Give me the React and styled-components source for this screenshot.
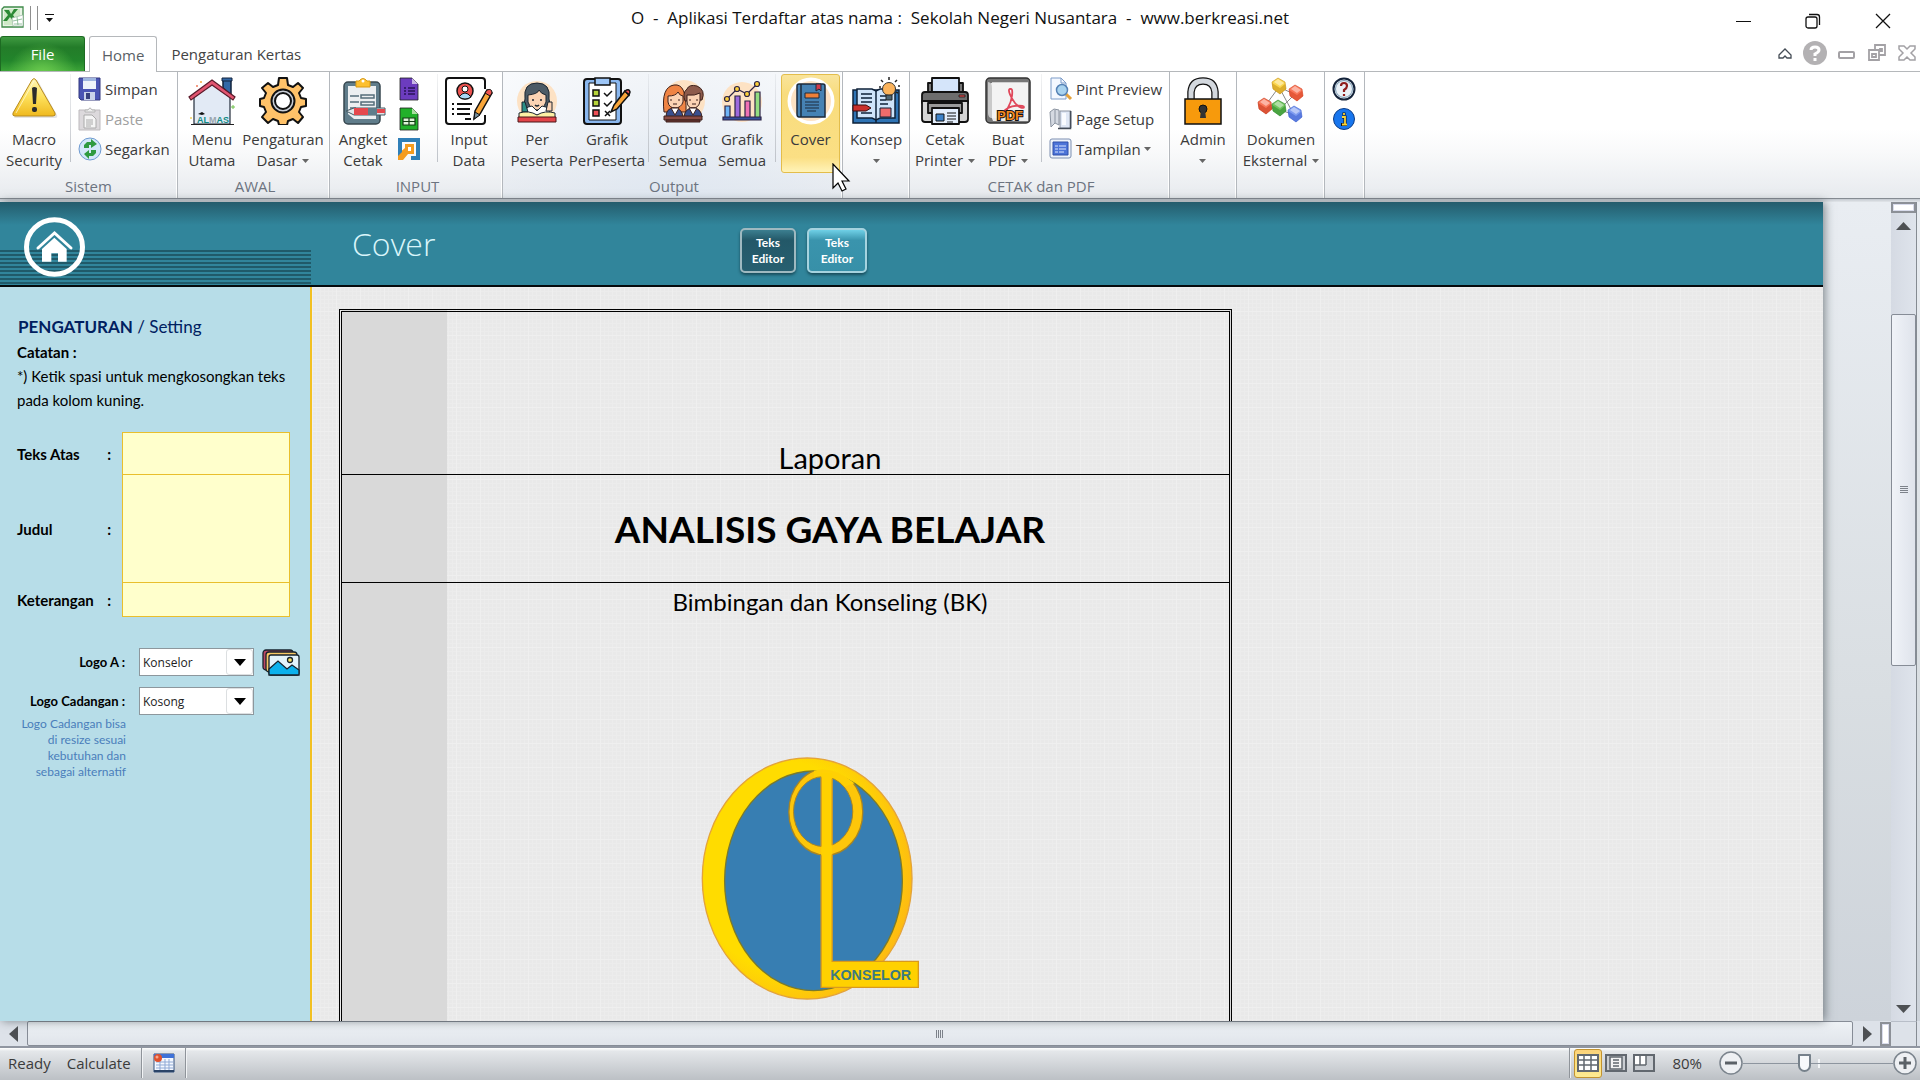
import React from 'react'
import styled, { createGlobalStyle, css } from 'styled-components'

const GlobalStyle = createGlobalStyle`
  * {
    box-sizing: border-box;
  }

  body {
    margin: 0;
    background: #fff;
    color: #3b3b3b;
    font-family: 'Open Sans', 'Noto Sans', sans-serif;
    font-size: 15px;
  }

  button, input, select, textarea {
    font: inherit;
    color: inherit;
  }

  svg {
    display: block;
    flex: none;
  }
`

const Window = styled.div`
  display: flex;
  flex-direction: column;
  height: 100vh;
  overflow: hidden;
`

const PlainButton = styled.button`
  display: flex;
  align-items: center;
  justify-content: center;
  padding: 0;
  border: 0;
  background: none;
`

/* ---------- title bar ---------- */

const TitleBar = styled.header`
  display: grid;
  grid-template-columns: 1fr auto 1fr;
  align-items: center;
  height: 36px;
`

const QuickAccess = styled.div`
  display: flex;
  align-items: center;
  gap: 6px;
  height: 30px;
`

const QuickLine = styled.span`
  width: 1px;
  height: 24px;
  background: #8f8f8f;
`

const Title = styled.h1`
  margin: 0;
  color: #111;
  font-size: 17px;
  font-weight: 400;
  line-height: 36px;
  white-space: pre;
`

const WindowButtons = styled.div`
  display: flex;
  justify-content: flex-end;
  gap: 24px;
  padding: 6px 14px 0 0;
`

const WindowButton = styled(PlainButton)`
  width: 46px;
  height: 30px;
`

/* ---------- tabs ---------- */

const TabBar = styled.nav`
  display: flex;
  align-items: flex-end;
  height: 36px;
  border-bottom: 1px solid #b5b8bb;
`

const FileTab = styled(PlainButton)`
  width: 85px;
  height: 35px;
  border: 1px solid #1d6b22;
  border-bottom: 0;
  border-radius: 3px 3px 0 0;
  background: radial-gradient(ellipse at 50% 115%, #6fce50 0%, rgba(80, 180, 60, 0) 60%),
    linear-gradient(#3f9a41 0%, #237c29 30%, #22852b 70%, #3ba337 100%);
  color: #fff;
`

const Tab = styled(PlainButton)`
  height: ${({ $active }) => ($active ? 36 : 35)}px;
  padding: 0 ${({ $active }) => ($active ? 12 : 14)}px;
  color: #444;
  ${({ $active }) => $active && css`
    margin: 0 0 -1px 4px;
    border: 1px solid #b5b8bb;
    border-bottom: 0;
    border-radius: 3px 3px 0 0;
    background: #fff;
    color: #5a5f66;
  `}
`

const TabTools = styled.div`
  display: flex;
  align-items: center;
  gap: 11px;
  margin-left: auto;
  padding: 0 4px 6px 0;
`

/* ---------- ribbon ---------- */

const Ribbon = styled.div`
  display: flex;
  height: 127px;
  border-bottom: 1px solid #858b92;
  background: linear-gradient(#fff 45%, #f8f9fa 65%, #e7eaee 100%);
`

const RibbonShade = styled.div`
  height: 3px;
  background: linear-gradient(#c3c8cf, #e2e6ea);
`

const Group = styled.section`
  display: flex;
  flex: none;
  flex-direction: column;
  width: ${({ $width }) => $width}px;
  padding: 2px 0 0 ${({ $flush }) => ($flush ? 0 : 3)}px;
  border-right: 1px solid #b4b8bd;
  box-shadow: inset -1px 0 #fff;
  ${({ $hot }) => $hot && css`
    background: radial-gradient(ellipse at 50% 120%, #dfe7f1 0%, rgba(224, 231, 240, 0.5) 60%, rgba(235, 240, 246, 0.3) 100%);
  `}
`

const GroupBody = styled.div`
  display: flex;
  height: 99px;
`

const GroupLabel = styled.h2`
  margin: 3px 0 0;
  color: #6c7480;
  font-size: 15px;
  font-weight: 400;
  line-height: 20px;
  text-align: center;
`

const BigButton = styled.button`
  position: relative;
  display: flex;
  flex: none;
  flex-direction: column;
  align-items: center;
  width: ${({ $width }) => $width}px;
  padding: 3px 0 0;
  border: 0;
  background: none;
  line-height: 21px;
  white-space: nowrap;

  ${({ $hot }) => $hot && css`
    padding-top: 2px;
    border: 1px solid #e3bd4b;
    border-radius: 3px;
    background: linear-gradient(#f9e49b, #f8dc7d 20%, #fbdf84 85%, #fff3b8 100%);
  `}
`

const BigLabel = styled.span`
  display: flex;
  flex-direction: column;
  align-items: center;
  margin-top: 4px;
`

const LabelLine = styled.span`
  display: flex;
  align-items: center;
  justify-content: center;
  gap: 5px;
  height: 21px;
`

const Divider = styled.span`
  flex: none;
  width: 1px;
  height: 88px;
  margin: ${({ $wide }) => ($wide ? '0 5px' : '0 3px 0 2px')};
  background: linear-gradient(rgba(190, 194, 200, 0.2), #bfc3c9);
`

const SmallColumn = styled.div`
  display: flex;
  flex: none;
  flex-direction: column;
  width: ${({ $width }) => $width || 'auto'};
  padding-left: 4px;
`

const SmallButton = styled(PlainButton)`
  justify-content: flex-start;
  gap: 3px;
  height: 30px;
  white-space: nowrap;
  color: ${({ disabled }) => (disabled ? '#a0a0a0' : 'inherit')};
`

const Pointer = styled.svg`
  position: absolute;
  z-index: 2;
  top: 88px;
  left: 50px;
`

/* ---------- sheet ---------- */

const Workspace = styled.div`
  display: flex;
  flex: 1;
  min-height: 0;
  background: linear-gradient(#e9edf2, #d9dee2 60%, #cdd3da);
`

const Sheet = styled.main`
  display: flex;
  flex: 1;
  flex-direction: column;
  min-width: 0;
  box-shadow: 2px 0 9px rgba(60, 70, 75, 0.6);
  z-index: 1;
`

const Banner = styled.div`
  display: flex;
  flex: none;
  height: 85px;
  border-bottom: 2px solid #050a0c;
  background: linear-gradient(#245c6c, #31859b 23px);
`

const HomeArea = styled.div`
  width: 311px;
  padding: 15px 0 0 24px;
  background: repeating-linear-gradient(#205a69 0 2px, #31859b 2px 4px) 0 48px no-repeat;
`

const BannerTitle = styled.h2`
  width: 388px;
  margin: 0;
  padding-left: 41px;
  color: #d9f5fa;
  font-size: 32px;
  font-weight: 300;
  line-height: 84px;
`

const BannerButtons = styled.div`
  display: flex;
  align-items: flex-start;
  gap: 11px;
  padding: 26px 0 0 41px;
`

const EditorButton = styled.button`
  width: ${({ $dark }) => ($dark ? 56 : 60)}px;
  height: 45px;
  padding: 0;
  border: 2px solid ${({ $dark }) => ($dark ? '#9fb9c0' : '#a5d3df')};
  border-radius: 5px;
  background: ${({ $dark }) => ($dark
    ? 'linear-gradient(#3c7f90, #235868 25%, #275f70)'
    : 'linear-gradient(#6fd0e6, #3a94ad 25%, #3790a8)')};
  box-shadow: 0 2px 3px rgba(10, 40, 50, 0.6);
  color: #fff;
  font-family: Lato, sans-serif;
  font-size: 12px;
  font-weight: 700;
  line-height: 16px;
`

const SheetBody = styled.div`
  display: flex;
  flex: 1;
  min-height: 0;
  background-color: #e9e9e9;
  background-image: repeating-linear-gradient(90deg, #efefef 0 1px, transparent 1px 24px),
    repeating-linear-gradient(#efefef 0 1px, transparent 1px 24px),
    repeating-linear-gradient(90deg, #ececec 0 1px, transparent 1px 4px),
    repeating-linear-gradient(#ececec 0 1px, transparent 1px 4px);
  color: #000;
  font-family: Lato, sans-serif;
`

const Sidebar = styled.aside`
  flex: none;
  width: 312px;
  padding-top: 28px;
  border-right: 2px solid #f2c021;
  background: #b7dde8;
  font-size: 15px;
`

const SideTitle = styled.h3`
  margin: 0 0 1px;
  padding-left: 18px;
  color: #002060;
  font-size: 17px;
  font-weight: 400;
  line-height: 24px;
`

const Notes = styled.p`
  margin: 0 0 20px;
  padding-left: 17px;
  line-height: 24px;
  white-space: nowrap;
`

const Field = styled.div`
  display: flex;
  gap: 11px;
  height: ${({ $height }) => $height}px;
  margin-bottom: -1px;
`

const FieldLabel = styled.label`
  display: flex;
  align-items: center;
  justify-content: space-between;
  width: 111px;
  padding-left: 17px;
  font-weight: 700;
`

const YellowBox = styled.textarea`
  width: 168px;
  padding: 4px;
  border: 1px solid #e9bf2c;
  background: #ffffcc;
  resize: none;
`

const LogoRows = styled.div`
  display: flex;
  flex-direction: column;
  gap: 11px;
  margin-top: 32px;
`

const LogoRow = styled.div`
  display: flex;
  align-items: center;
  height: 28px;
`

const LogoLabel = styled.label`
  width: 125px;
  margin-right: 14px;
  font-size: 13px;
  font-weight: 700;
  text-align: right;
`

const SelectBox = styled.div`
  display: grid;
  grid-template-columns: 1fr 27px;
  width: 115px;
  height: 28px;
  margin-right: 8px;
  border: 1px solid #8d979d;
  background: #fff;
`

const Select = styled.select`
  grid-area: 1 / 1 / 2 / 3;
  padding: 0 0 0 3px;
  border: 0;
  background: none;
  color: #222;
  font-family: 'Open Sans', sans-serif;
  font-size: 12px;
  appearance: none;
`

const SelectArrow = styled.span`
  grid-area: 1 / 2 / 2 / 3;
  display: flex;
  align-items: center;
  justify-content: center;
  border: 1px solid #dcdfe1;
  border-radius: 3px;
  pointer-events: none;
`

const Hint = styled.p`
  width: 126px;
  margin: 1px 0 0;
  padding-left: 12px;
  color: #4a7ebb;
  font-size: 12px;
  line-height: 16px;
  text-align: right;
`

const Report = styled.article`
  display: flex;
  flex-direction: column;
  width: 893px;
  margin: 22px 0 0 27px;
  border: 3px double #000;
  border-bottom: 0;
  background: linear-gradient(90deg, #d9d9d9 105px, transparent 105px);
`

const ReportRow = styled.div`
  display: flex;
  flex-direction: column;
  align-items: center;
  justify-content: ${({ $align }) => $align};
  height: ${({ $height }) => $height};
  padding: ${({ $last }) => ($last ? 5 : 0)}px 16px 0 105px;
  border-bottom: ${({ $last }) => ($last ? 0 : '1px solid #000')};
`

const ReportText = styled.p`
  margin: 0;
  font-size: ${({ $size }) => $size}px;
  font-weight: ${({ $bold }) => ($bold ? 700 : 400)};
  line-height: ${({ $size }) => $size + 4}px;
`

const LogoHolder = styled.div`
  padding: 140px 40px 0 0;
`

/* ---------- scroll bars ---------- */

const Backdrop = styled.div`
  flex: none;
  width: 68px;
`

const VScroll = styled.div`
  display: flex;
  flex: none;
  flex-direction: column;
  align-items: center;
  width: 26px;
  margin-right: 3px;
  border-right: 1px solid #858b92;
  background: linear-gradient(90deg, #d5dae3, #dfe4ec);
`

const SplitBox = styled.span`
  width: ${({ $upright }) => ($upright ? 11 : 25)}px;
  height: ${({ $upright }) => ($upright ? 24 : 11)}px;
  border: 2px solid #8c9097;
  background: #fff;
  box-shadow: inset 0 0 0 1px #d9dcec;
`

const ScrollArrow = styled(PlainButton)`
  flex: none;
  width: 27px;
  height: 25px;
`

const Gap = styled.span`
  flex: ${({ $grow }) => $grow} 0 0;
`

const Thumb = styled.div`
  display: flex;
  align-items: center;
  justify-content: center;
  flex: ${({ $grow }) => $grow} 0 0;
  align-self: stretch;
  border: 1px solid #868c96;
  border-radius: 2px;
  background: ${({ $upright }) => ($upright
    ? 'linear-gradient(90deg, #f0f3f8, #dfe3eb)'
    : 'linear-gradient(#eef2f6, #e0e4ea)')};
`

const HScroll = styled.div`
  display: flex;
  flex: none;
  align-items: center;
  height: 27px;
  padding: 0 3px 0 0;
  border-bottom: 2px solid #9096a1;
  background: #dde2e9;
`

const Corner = styled.span`
  align-self: stretch;
  width: 26px;
  border-top: 1px solid #b8bec8;
  border-right: 1px solid #858b92;
`

/* ---------- status bar ---------- */

const StatusBar = styled.footer`
  display: flex;
  flex: none;
  align-items: center;
  height: 32px;
  padding: 0 3px 2px 8px;
  background: linear-gradient(#fff, #e4e7ea 10%, #bcc0c5);
`

const StatusTexts = styled.div`
  display: flex;
  gap: 16px;
`

const StatusLine = styled.span`
  width: 2px;
  height: 30px;
  margin: 0 ${({ $gap }) => $gap}px;
  border-left: 1px solid #8f949a;
  border-right: 1px solid #f1f3f5;
`

const ViewButton = styled(PlainButton)`
  width: 28px;
  height: 29px;
  ${({ $active }) => $active && css`
    border: 1px solid #c29330;
    border-radius: 3px;
    background: linear-gradient(#fbd27a, #fde07c 50%, #fdea93);
  `}
`

const Spacer = styled.span`
  flex: 1;
`

const ZoomLabel = styled.label`
  padding: 0 17px 0 14px;
`

const ZoomRange = styled.input`
  width: 150px;
  height: 24px;
  margin: 0;
  appearance: none;
  background: linear-gradient(#8d959f, #8d959f) 0 12px / 100% 1px no-repeat,
    linear-gradient(#f4f6f8, #f4f6f8) 75px 8px / 2px 9px no-repeat;

  &::-webkit-slider-thumb {
    appearance: none;
    width: 13px;
    height: 18px;
    border: 2px solid #76818b;
    border-radius: 1px 1px 7px 7px;
    background: #f7f9fb;
  }
`

/* ---------- icons ---------- */

const Icon = ({ size = 48, box = 48, children }) => (
  <svg width={size} height={size} viewBox={`0 0 ${box} ${box}`} fill="none" aria-hidden="true">
    {children}
  </svg>
)

const Caret = () => (
  <svg width="7" height="4" viewBox="0 0 7 4" aria-hidden="true">
    <path d="M0 0h7L3.500 4z" fill="#666" />
  </svg>
)

const ExcelIcon = () => (
  <Icon size={24} box={24}>
    <path d="M4 1h19v20H2V3z" fill="#e9f4e6" stroke="#3f8a4a" strokeWidth="1.300" />
    <path d="M4 3h16v16H4z" fill="#cfe9c8" />
    <path d="M4 4h5l2 4 3-5h4l-5 6 4 6h-4l-3-4-3 4H3l5-6z" fill="#2c8a35" />
    <path d="M12 12l11-3v11l-10 0z" fill="#fff" stroke="#9bb8a4" strokeWidth=".7" />
    <path d="M13 15l9-2M14 18h8M17 11l1 8" stroke="#6aa878" strokeWidth=".7" />
  </Icon>
)

const WarningIcon = () => (
  <Icon>
    <defs>
      <linearGradient id="warn" x1="0" y1="0" x2="0" y2="1">
        <stop offset="0" stopColor="#fff6b8" />
        <stop offset=".5" stopColor="#fde05a" />
        <stop offset="1" stopColor="#efb91f" />
      </linearGradient>
    </defs>
    <path d="M24 4q2-3 4 0l19 34q1 3-2 3H6q-3 0-2-3z" fill="#c9c9c9" opacity=".5" />
    <path d="M22 3q2-3 4 0l19 33q1 3-2 3H5q-3 0-2-3z" fill="url(#warn)" stroke="#b98b1e" />
    <path d="M24 4L6 36" stroke="#fffbe0" opacity=".7" />
    <path d="M22 11q2-2 5 0l-1 16h-3z" fill="#2c2c2c" />
    <rect x="22" y="30" width="5" height="5" rx="2" fill="#2c2c2c" />
  </Icon>
)

const SaveIcon = () => (
  <Icon size={24} box={24}>
    <path d="M1 1h21v22H3l-2-2z" fill="#4a55b4" stroke="#32397f" />
    <path d="M5 1h13v11H5z" fill="#eef4fb" />
    <path d="M5 1h13v3H5z" fill="#9fb6e0" />
    <path d="M6 15h11v8H6z" fill="#c9d3ea" />
    <path d="M8 16h4v6H8z" fill="#39427f" />
  </Icon>
)

const PasteIcon = () => (
  <Icon size={24} box={24}>
    <path d="M1 3h21v20H1z" fill="#dcd9dc" stroke="#bdbabd" />
    <path d="M7 5V3h3q2-4 4 0h3v2z" fill="#efefef" stroke="#b5b5b5" />
    <path d="M6 8h8l4 4v9H6z" fill="#f5f5f5" stroke="#aaa" />
    <path d="M8 13h7M8 15h7M8 17h7M8 19h5" stroke="#aaa" />
  </Icon>
)

const RefreshIcon = () => (
  <Icon size={24} box={24}>
    <circle cx="12" cy="12" r="11" fill="#d4e7fb" stroke="#6f9bd1" />
    <path d="M6 12V8l3-3h4V2l6 5-6 4V8h-2v4z" fill="#2f9a41" />
    <path d="M18 12v4l-3 3h-4v3l-5-5 5-4v3h2v-4z" fill="#2f9a41" />
    <path d="M3 12h18" stroke="#d4e7fb" strokeWidth="2" />
  </Icon>
)

const HouseIcon = () => (
  <Icon>
    <path d="M35 2h8v16l-8-7z" fill="#3268a6" stroke="#12233d" strokeWidth="1.500" />
    <path d="M34 1h10v3H34z" fill="#3268a6" stroke="#12233d" />
    <path d="M6 20L24 5l18 15v27H6z" fill="#e2eaf5" stroke="#222c3a" strokeWidth="1.200" />
    <path d="M24 3l23 17-2 3L24 8 3 23l-2-3z" fill="#e25570" stroke="#5b1a2a" strokeWidth="1.200" />
    <path d="M3 47.500h43" stroke="#222" />
    <path d="M10 37l4-2 3 2-3 1z" fill="#111" />
    <text x="9" y="46" fontFamily="Liberation Sans, sans-serif" fontSize="9" fontWeight="700">
      <tspan fill="#128a84">AL</tspan>
      <tspan fill="#9aa5ad">M</tspan>
      <tspan fill="#128a84">AS</tspan>
    </text>
    <circle cx="13" cy="5" r="1" fill="#f4a93c" />
    <circle cx="9" cy="9" r="1" fill="#f07a5a" />
    <path d="M43 30h4M45 28v4" stroke="#6fc04b" />
    <circle cx="3" cy="41" r="1" fill="#f2d25c" />
  </Icon>
)

const GearIcon = () => (
  <Icon>
    <g fill="#ffc269" stroke="#111" strokeWidth="2" strokeLinejoin="round">
      <path d="M20 1h8l1 7 5 2 5-4 5 5-4 5 2 5 5 1v7l-5 1-2 5 4 5-5 6-5-4-5 2-1 4h-8l-1-4-5-2-5 4-6-6 4-5-2-5-4-1v-7l4-1 2-5-4-5 6-5 5 4 5-2z" />
      <circle cx="24" cy="24" r="11.500" fill="#c9ced6" />
      <circle cx="24" cy="24" r="8" fill="#fff" />
    </g>
  </Icon>
)

const ClipboardIcon = () => (
  <Icon>
    <rect x="5" y="5" width="36" height="42" rx="4" fill="#607d8b" stroke="#37474f" strokeWidth="1.500" />
    <path d="M9 9h28v33H15l-6-5z" fill="#eceff1" />
    <path d="M17 4h3q4-5 8 0h3v6H17z" fill="#fdc02f" stroke="#d99a14" />
    <circle cx="24" cy="4" r="1.500" fill="#fff" />
    <path d="M11 19h9M11 25h9M11 31h6M22 18h13v3H22zM22 25h13v3H22z" stroke="#546e7a" strokeWidth="1.500" />
    <path d="M7 34l8-3h31v7H15z" fill="#dfe5e8" stroke="#455a64" />
    <path d="M15 31h14v7H15z" fill="#e5484d" />
    <path d="M29 31h9v7h-9z" fill="#607d8b" />
    <path d="M38 32h8v4h-8z" fill="#e5484d" />
  </Icon>
)

const FileGlyph = ({ color, corner, children }) => (
  <Icon size={24} box={24}>
    <path d="M3 1h12l6 6v16H3z" fill={color} stroke="#1f1f1f" strokeWidth=".8" />
    <path d="M15 1v6h6z" fill={corner} />
    {children}
  </Icon>
)

const FormIcon = () => (
  <FileGlyph color="#6c3cbe" corner="#c9b6e8">
    <path d="M7 11h2M7 14h2M7 17h2M11 11h7M11 14h7M11 17h7" stroke="#2a1358" strokeWidth="1.500" />
  </FileGlyph>
)

const TableFileIcon = () => (
  <FileGlyph color="#22b12a" corner="#a8e0a0">
    <path d="M6 11h12v7H6zM6 14.500h12M12 11v7" fill="#dff5d8" stroke="#123d14" strokeWidth="1.200" />
  </FileGlyph>
)

const PipeIcon = () => (
  <Icon size={24} box={24}>
    <path d="M3 10V3h18v18h-7" stroke="#2f7fb8" strokeWidth="4" />
    <path d="M8 7h9v10h-6l-5 6H1v-6l7-6z" fill="#f59c1f" />
    <path d="M11 10h3v4h-3z" fill="#fff" />
    <path d="M1 10h4v5l-4 4z" fill="#2f7fb8" />
  </Icon>
)

const InputIcon = () => (
  <Icon>
    <path d="M40 12V4q0-3-3-3H4Q1 1 1 4v40q0 3 3 3h33q3 0 3-3v-6" fill="#fff" stroke="#111" strokeWidth="2" />
    <circle cx="20" cy="14" r="8" fill="#ee5350" stroke="#111" strokeWidth="1.500" />
    <circle cx="20" cy="12" r="3" fill="#fff" stroke="#111" />
    <path d="M14 20q6-8 12 0-6 4-12 0z" fill="#a9d8f5" stroke="#111" />
    <path d="M7 27h2M12 27h15M7 32h2M12 32h13M7 37h2M12 37h13M20 42h6" stroke="#111" strokeWidth="2" />
    <path d="M42 13l5 3-12 21-6 5 1-8z" fill="#f9a63a" stroke="#111" strokeWidth="1.500" />
    <path d="M42 13q5-2 5 3l-2 3-5-3z" fill="#ee5350" stroke="#111" />
    <path d="M30 35l5 3-6 4z" fill="#78909c" stroke="#111" />
  </Icon>
)

const ReaderIcon = () => (
  <Icon>
    <circle cx="24" cy="24" r="20" fill="#fde2c4" />
    <path d="M12 22Q10 6 24 6t12 16l2 10H10z" fill="#4d5b66" stroke="#1d2630" />
    <path d="M15 18q10-1 11-5 2 4 7 5v7q-3 8-9 8t-9-8z" fill="#fbd3b4" stroke="#1d2630" />
    <path d="M11 38q0-8 8-9l5 5 5-5q8 1 8 9z" fill="#fff" stroke="#1d2630" />
    <path d="M12 25h-3v10h6z" fill="#2c8f87" stroke="#1d2630" />
    <path d="M35 25h4v9h-6z" fill="#fbd3b4" stroke="#1d2630" />
    <path d="M20 22v2M28 22v2M22 28q2 2 4 0" stroke="#1d2630" strokeWidth="1.500" />
    <path d="M6 36q10-3 18 2 8-5 18-2v6H6z" fill="#fdf1a5" stroke="#1d2630" />
    <path d="M5 40h38v5H5z" fill="#e34549" stroke="#4b1618" />
  </Icon>
)

const ChecklistIcon = () => (
  <Icon>
    <rect x="1" y="2" width="37" height="45" rx="3" fill="#8ab7ee" stroke="#111" strokeWidth="2" />
    <path d="M6 6h27v37H6z" fill="#fff" stroke="#111" />
    <path d="M12 1h15v7H12z" fill="#9dc6f7" stroke="#111" strokeWidth="1.500" />
    <g stroke="#111" strokeWidth="1.500">
      <path d="M10 13h6v6h-6zM10 23h6v6h-6z" fill="#b7d43a" />
      <path d="M10 33h6v6h-6z" fill="#ee4f55" />
      <path d="M21 16l3 3 5-5M21 26l3 3 5-5M22 34l5 5M27 34l-5 5" />
      <path d="M42 14l4 4-12 14-6 3 3-7z" fill="#f9a63a" />
      <path d="M42 14q4-3 5 1l-1 3-4-4z" fill="#ee4f55" />
    </g>
  </Icon>
)

const PupilsIcon = () => (
  <Icon>
    <circle cx="25" cy="24" r="21" fill="#fde2c4" />
    <g stroke="#3d211c">
      <path d="M5 35Q2 10 15 8t12 27z" fill="#ef8444" />
      <path d="M26 24q-3-8 2-12 2-5 10-3 9 4 5 14z" fill="#8d5b4c" />
      <path d="M9 19q8 0 10-4 2 4 5 4v6q-2 6-8 6t-7-6z" fill="#fbd3b4" />
      <path d="M28 18q8 1 13-2v8q-1 7-7 7t-6-7z" fill="#fbd3b4" />
      <path d="M7 40q0-9 8-9t9 9zM25 40q1-9 9-9t9 9z" fill="#39508f" />
      <path d="M12 31h8l-4 7zM30 31h8l-4 7z" fill="#fff" />
      <path d="M5 39h38v4H5z" fill="#8a4b42" />
      <path d="M7 43h34v2H7z" fill="#6e3833" />
      <path d="M12 22v2M20 22v2M31 22v2M38 22v2M14 27h4M33 27h4" />
    </g>
  </Icon>
)

const ChartIcon = () => (
  <Icon>
    <circle cx="24" cy="25" r="20" fill="#fde2c4" />
    <g stroke="#2c2345" strokeWidth="1.200">
      <path d="M7 29h5v12H7z" fill="#6eb4f7" />
      <path d="M17 19h5v22h-5z" fill="#9c69dd" />
      <path d="M27 24h5v17h-5z" fill="#ef71b5" />
      <path d="M37 15h5v26h-5z" fill="#93dd81" />
      <path d="M5 40h38v3H5z" fill="#344f9d" />
      <path d="M9 22l10-10 10 5 10-10" />
      <g fill="#fbcf3c">
        <circle cx="9" cy="22" r="2.500" />
        <circle cx="19" cy="12" r="2.500" />
        <circle cx="29" cy="17" r="2.500" />
        <circle cx="39" cy="7" r="2.500" />
      </g>
    </g>
  </Icon>
)

const BookIcon = () => (
  <Icon>
    <circle cx="24" cy="24" r="23.500" fill="#fff" />
    <circle cx="24" cy="24" r="20" fill="#fde2c4" />
    <path d="M12 7h24q2 0 2 2v31H12q-2 0-2-3V9q0-2 2-2z" fill="#4682b4" stroke="#1c2b3d" strokeWidth="1.500" />
    <path d="M14 7v33" stroke="#1c2b3d" strokeWidth="1.500" />
    <path d="M29 7h5v7l-2-2-3 2z" fill="#d33b4b" stroke="#1c2b3d" />
    <path d="M18 16h14v5H18z" fill="#ef8038" stroke="#1c2b3d" />
    <path d="M18 25h14M18 28h14M18 31h14" stroke="#1c2b3d" strokeWidth="1.200" />
    <path d="M20 34h9" stroke="#1c2b3d" />
  </Icon>
)

const ConceptIcon = () => (
  <Icon>
    <path d="M1 13h46v33H1z" fill="#2f74b5" stroke="#0e2138" strokeWidth="1.500" />
    <path d="M5 12h15l4 2 4-2h15v29H28l-4 2-4-2H5z" fill="#cfe4fa" stroke="#0e2138" strokeWidth="1.500" />
    <path d="M24 14v32M9 17h11M9 21h11M9 25h11M9 36h11M28 19h6M28 23h6M28 27h8" stroke="#0e2138" strokeWidth="1.500" />
    <path d="M28 31h11v9H28z" fill="#ef6c6c" stroke="#0e2138" />
    <path d="M1 28h13l5 3-5 3H1z" fill="#c9302c" stroke="#3a0c0c" />
    <circle cx="37" cy="12" r="6.500" fill="#fbb35b" stroke="#333" />
    <path d="M34 18h6v5h-6z" fill="#4d6572" stroke="#222" />
    <path d="M37 0v3M29 3l2 2M45 3l-2 2M27 10h2M46 9h2M46 16l-2-1" stroke="#222" strokeWidth="1.500" />
  </Icon>
)

const PrinterIcon = () => (
  <Icon>
    <g stroke="#111" strokeWidth="1.800" strokeLinejoin="round">
      <path d="M7 6h4v12H7zM38 6h4v12h-4z" fill="#777" />
      <path d="M11 1h27v17H11z" fill="#d5e5fa" />
      <path d="M4 15h40q3 0 3 3v8H1v-8q0-3 3-3z" fill="#6d6d6d" />
      <path d="M1 24h46v18q0 3-3 3H4q-3 0-3-3z" fill="#d4d4d4" />
      <path d="M7 26h34v10H7z" fill="#9a9a9a" />
      <path d="M11 31h27v16H11z" fill="#e4effd" />
    </g>
    <path d="M15 37h8v7h-8z" fill="#3d82c9" stroke="#111" />
    <path d="M26 36h9M26 39h9M26 42h9M26 45h6" stroke="#111" />
    <path d="M38 18h6v2h-6z" fill="#e24b4b" stroke="#111" strokeWidth=".7" />
  </Icon>
)

const PdfIcon = () => (
  <Icon>
    <rect x="2" y="1" width="44" height="45" rx="4" fill="#777" stroke="#333" strokeWidth="1.500" />
    <path d="M7 6h37v38H9l-2-5z" fill="#ececec" />
    <path d="M8 5h36v36H8z" fill="#f6f6f6" opacity=".7" />
    <path d="M4 5q4 0 4 6v30q-4 0-4-5z" fill="#c9c9c9" />
    <path d="M26 12c-3 0 1 9 5 14s9 6 9 4-11-2-16 1-7 6-5 6 8-10 9-18-1-7-2-7z" stroke="#e0475a" strokeWidth="1.800" />
    <text x="13" y="43" fill="#f58a1f" stroke="#111" strokeWidth="2" paintOrder="stroke" fontFamily="Liberation Sans, sans-serif" fontSize="13" fontWeight="700">PDF</text>
  </Icon>
)

const PreviewIcon = () => (
  <Icon size={24} box={24}>
    <path d="M2 1h10l5 5v16H2z" fill="#f4f8ff" stroke="#7d9cc9" />
    <path d="M12 1v5h5" stroke="#7d9cc9" />
    <path d="M17 17l5 5" stroke="#e4a23c" strokeWidth="3" />
    <circle cx="13" cy="13" r="5.500" fill="#a9d3ef" stroke="#5682b5" strokeWidth="1.500" />
  </Icon>
)

const PageSetupIcon = () => (
  <Icon size={24} box={24}>
    <path d="M1 5l4-3 5 1v15l-4-2-4 4zM6 3v13" fill="#d5dae2" stroke="#8a93a0" />
    <path d="M11 4h11v17H11z" fill="#dfe7f5" stroke="#8b93a1" />
    <path d="M21.500 4v17.500H9" stroke="#444c58" strokeWidth="1.500" />
    <path d="M13 6h4v12h-4z" fill="#f9fbff" />
  </Icon>
)

const ViewIcon = () => (
  <Icon size={24} box={24}>
    <rect x="1" y="2" width="21" height="19" rx="2" fill="#eef3fa" stroke="#7c8fb1" />
    <path d="M4 5h15v13H4z" fill="#4d74d8" stroke="#2e4fa9" />
    <path d="M6 9h3M6 12h3M6 15h3M10 9h7M10 12h7M10 15h5" stroke="#dbe6ff" />
  </Icon>
)

const LockIcon = () => (
  <Icon>
    <path d="M12 23v-8Q13 4 24 4t12 11v8" stroke="#111" strokeWidth="7.500" />
    <path d="M12 23v-8Q13 4 24 4t12 11v8" stroke="#d3d8de" strokeWidth="5" />
    <path d="M6 22h36v25H6z" fill="#f79a0c" stroke="#111" strokeWidth="1.500" />
    <circle cx="24" cy="32" r="4" fill="#333" stroke="#111" />
    <path d="M22 33h4l1 8h-6z" fill="#333" />
  </Icon>
)

const Gem = ({ x, y, light, dark }) => (
  <g transform={`translate(${x} ${y})`}>
    <path d="M-1-8l7 4 1 7-6 5-7-5-1-7z" fill={light} stroke={dark} strokeWidth=".6" />
    <path d="M1 8V2l-8-5 1 6zM1 2l5-4 1 5-6 5z" fill={dark} opacity=".55" />
    <path d="M-5-4l4-3 6 4-4 3z" fill="#fff" opacity=".45" />
  </g>
)

const DocumentsIcon = () => (
  <Icon>
    <path d="M22 10L8 29M22 10l15 28M22 10l17 8M24 31l14-14M8 29l28 8" stroke="#888" />
    <Gem x={22} y={9} light="#fbd64e" dark="#c48f13" />
    <Gem x={39} y={16} light="#f9775a" dark="#d6401f" />
    <Gem x={8} y={29} light="#f9775a" dark="#c5371a" />
    <Gem x={22} y={31} light="#6fc45c" dark="#2c8a2c" />
    <Gem x={38} y={37} light="#7f9cf0" dark="#3a5fd0" />
  </Icon>
)

const HelpIcon = () => (
  <Icon size={24} box={24}>
    <circle cx="12" cy="12" r="10.500" fill="#eaf1f7" stroke="#14233a" strokeWidth="2" />
    <circle cx="12" cy="12" r="8.500" stroke="#7c9bb4" />
    <path d="M9 9q0-3 3-3t3 3q0 2-3 4v2M12 17v2" stroke="#8f1d1d" strokeWidth="2.200" />
  </Icon>
)

const InfoIcon = () => (
  <Icon size={24} box={24}>
    <circle cx="12" cy="12" r="10.500" fill="#1876ee" stroke="#0c3d87" />
    <path d="M10 10h3v7M9 17.500h6M12 5.500v2.500" stroke="#111" strokeWidth="3" />
    <path d="M10 10h3v7M10 17.500h5M12 6v2" stroke="#f8d23a" strokeWidth="1.800" />
  </Icon>
)

const HomeIcon = () => (
  <svg width="61" height="60" viewBox="0 0 183 180" fill="none" aria-hidden="true">
    <ellipse cx="91.500" cy="90" rx="84" ry="82" stroke="#fff" strokeWidth="15" />
    <path d="M42 93l49.500-45L141 93" stroke="#fff" strokeWidth="9" strokeLinecap="round" />
    <path d="M54 134V96l37-34 37 34v38h-26v-25H82v25z" fill="#fff" />
  </svg>
)

const GalleryIcon = () => (
  <svg width="38" height="27" viewBox="0 0 38 27" fill="none" aria-hidden="true">
    <g stroke="#16222c" strokeWidth="1.300">
      <rect x="1" y="1" width="30" height="20" rx="3" fill="#bb4866" />
      <rect x="4" y="3" width="31" height="20" rx="3" fill="#f8c766" />
      <rect x="7" y="6" width="30" height="20" rx="2" fill="#e3f3fb" />
      <path d="M7 20l9-8 9 8 5-4 7 5v5H7z" fill="#0cb1ec" />
      <circle cx="28" cy="11" r="2.500" fill="#f8e166" />
    </g>
  </svg>
)

const KonselorLogo = () => (
  <svg width="219" height="245" viewBox="120 78 656 736" role="img" aria-label="Logo Konselor">
    <defs>
      <radialGradient id="gold" cx=".4" cy=".45" r=".62">
        <stop offset=".7" stopColor="#ffdc00" />
        <stop offset="1" stopColor="#fdb813" />
      </radialGradient>
      <clipPath id="inner">
        <ellipse cx="457" cy="453" rx="267" ry="330" />
      </clipPath>
    </defs>
    <ellipse cx="438" cy="446" rx="315" ry="362" fill="url(#gold)" stroke="#e3a33a" strokeWidth="4" />
    <ellipse cx="457" cy="453" rx="267" ry="330" fill="#377eb2" stroke="#7a7a2c" strokeWidth="4" />
    <g clipPath="url(#inner)">
      <ellipse cx="494" cy="246" rx="111" ry="130" fill="#fdc60a" stroke="#a98522" strokeWidth="4" />
    </g>
    <path d="M458 122q60-16 122 38l-30 10-92-30z" fill="#ffd004" />
    <ellipse cx="486" cy="245" rx="89" ry="105" fill="#377eb2" stroke="#a98522" strokeWidth="3" />
    <path d="M480 128h33v567h259v78H480z" fill="#ffd100" />
    <path d="M480 142v208M513 146v200M480 376v397h292v-78H513V374" fill="none" stroke="#d99a1c" strokeWidth="4" />
    <text x="507" y="752" fill="#3b7a80" fontFamily="Liberation Sans, sans-serif" fontSize="43" fontWeight="700">KONSELOR</text>
  </svg>
)

const MacroSheetIcon = () => (
  <svg width="22" height="20" viewBox="0 0 22 20" fill="none" aria-hidden="true">
    <path d="M1 1h20v18H1z" fill="#f4f8ff" stroke="#33517e" />
    <path d="M1 1h20v4H1z" fill="#3f72d8" />
    <path d="M3 9h17M3 12h17M3 15h17M7 6v12M12 6v12M16 6v12" stroke="#8fa9d5" />
    <path d="M1 18h20" stroke="#2b4468" strokeWidth="2" />
    <circle cx="5" cy="5" r="4" fill="#e0512c" />
    <circle cx="4" cy="4" r="1.500" fill="#f7a58c" />
  </svg>
)

const viewShapes = {
  Normal: 'M1 6h20M1 11h20M7 1v15M14 1v15',
  'Page Layout': 'M5 3h12v12H5zM8 6h6M8 9h6M8 12h6',
  'Page Break': 'M7 1v10M13 1v10M1 11h12',
}

const ViewGlyph = ({ name }) => (
  <svg width="22" height="18" viewBox="0 0 22 18" fill="none" aria-hidden="true">
    <path d="M1 1h20v16H1z" fill={name === 'Normal' ? '#fff' : '#c9cdd2'} stroke="#62686f" strokeWidth="2" />
    {name === 'Page Break' && <path d="M2 2h11v9H2z" fill="#fff" />}
    <path d={viewShapes[name]} fill={name === 'Page Layout' ? '#f3f3f3' : 'none'} stroke="#62686f" strokeWidth="1.500" />
  </svg>
)

const ZoomGlyph = ({ plus }) => (
  <Icon size={24} box={24}>
    <circle cx="12" cy="12" r="11" fill="#eef0f3" stroke="#7b848d" strokeWidth="1.500" />
    <path d={plus ? 'M6 12h12M12 6v12' : 'M6 12h12'} stroke="#5b6167" strokeWidth="3" />
  </Icon>
)

const arrowPaths = {
  up: 'M0 12h15L7.500 4z',
  down: 'M0 4h15L7.500 12z',
  left: 'M12 0v16L3 8z',
  right: 'M4 0v16l9-8z',
}

const ArrowGlyph = ({ to }) => (
  <svg width="16" height="16" viewBox="0 0 16 16" aria-hidden="true">
    <path d={arrowPaths[to]} fill="#4d5053" />
  </svg>
)

/* ---------- parts ---------- */

const Large = ({ icon, lines, width, menu, hot, children }) => (
  <BigButton type="button" $width={width} $hot={hot}>
    {icon}
    <BigLabel>
      {lines.map((line, i) => (
        <LabelLine key={line}>
          {line}
          {menu && i === 1 && <Caret />}
        </LabelLine>
      ))}
      {menu && lines.length === 1 && <LabelLine><Caret /></LabelLine>}
    </BigLabel>
    {children}
  </BigButton>
)

const Small = ({ icon, label, name, menu, disabled }) => (
  <SmallButton type="button" disabled={disabled} aria-label={name}>
    {icon}
    {label}
    {menu && <Caret />}
  </SmallButton>
)

const LogoSelect = ({ id, label, value, children }) => (
  <LogoRow>
    <LogoLabel htmlFor={id}>{label}</LogoLabel>
    <SelectBox>
      <Select id={id} defaultValue={value}>
        <option>{value}</option>
      </Select>
      <SelectArrow>
        <svg width="12" height="7" viewBox="0 0 12 7"><path d="M0 0h12L6 7z" fill="#000" /></svg>
      </SelectArrow>
    </SelectBox>
    {children}
  </LogoRow>
)

const fields = [
  { id: 'teks-atas', label: 'Teks Atas', height: 43 },
  { id: 'judul', label: 'Judul', height: 109 },
  { id: 'keterangan', label: 'Keterangan', height: 35 },
]

const App = () => {
  return (
    <Window>
      <GlobalStyle />
      <TitleBar>
        <QuickAccess>
          <ExcelIcon />
          <QuickLine />
          <QuickLine />
          <PlainButton type="button" aria-label="Customize">
            <svg width="14" height="18" viewBox="0 0 14 18"><path d="M1 5h9v1H1zM2 9h7l-3.500 4z" fill="#111" /></svg>
          </PlainButton>
        </QuickAccess>
        <Title>{'O  -  Aplikasi Terdaftar atas nama :  Sekolah Negeri Nusantara  -  www.berkreasi.net'}</Title>
        <WindowButtons>
          <WindowButton type="button" aria-label="Minimize">
            <svg width="16" height="16" viewBox="0 0 16 16"><path d="M1 8.500h15" stroke="#111" /></svg>
          </WindowButton>
          <WindowButton type="button" aria-label="Restore">
            <svg width="16" height="16" viewBox="0 0 16 16" fill="none" stroke="#111" strokeWidth="1.300">
              <rect x="1" y="4" width="11" height="11" rx="2" />
              <path d="M4 1.500h8q2.500 0 2.500 2.500v8" />
            </svg>
          </WindowButton>
          <WindowButton type="button" aria-label="Close">
            <svg width="16" height="16" viewBox="0 0 16 16"><path d="M1 1l14 14M15 1L1 15" stroke="#111" strokeWidth="1.300" /></svg>
          </WindowButton>
        </WindowButtons>
      </TitleBar>

      <TabBar>
        <FileTab type="button">File</FileTab>
        <Tab type="button" $active>Home</Tab>
        <Tab type="button">Pengaturan Kertas</Tab>
        <TabTools>
          <PlainButton type="button" aria-label="Collapse ribbon">
            <svg width="14" height="12" viewBox="0 0 14 12"><path d="M1 8l6-6 6 6v3H9L7 9l-2 2H1z" fill="#fff" stroke="#444c55" strokeWidth="1.300" /></svg>
          </PlainButton>
          <PlainButton type="button" aria-label="Help">
            <Icon size={24} box={24}>
              <circle cx="12" cy="12" r="12" fill="#b3b1b3" />
              <path d="M8 9q0-3 4-3t4 3q0 2-4 4v2M12 17v3" stroke="#fff" strokeWidth="3" />
            </Icon>
          </PlainButton>
          <PlainButton type="button" aria-label="Minimize workbook">
            <svg width="18" height="18" viewBox="0 0 18 18"><rect x="1" y="8" width="15" height="6" rx="1" fill="#fff" stroke="#a3a1a5" strokeWidth="2" /></svg>
          </PlainButton>
          <PlainButton type="button" aria-label="Restore workbook">
            <svg width="20" height="18" viewBox="0 0 20 18" fill="#fff" stroke="#a3a1a5" strokeWidth="1.800">
              <path d="M8 1h10v10H8z" />
              <path d="M13 5h2v2h-2z" />
              <path d="M2 6h10v10H2zM5 10h4v3H5z" />
            </svg>
          </PlainButton>
          <PlainButton type="button" aria-label="Close workbook">
            <svg width="18" height="16" viewBox="0 0 18 16"><path d="M1 1h5l3 3 3-3h5v3l-4 4 4 4v3h-5l-3-3-3 3H1v-3l4-4-4-4z" fill="#fff" stroke="#a3a1a5" strokeWidth="1.500" /></svg>
          </PlainButton>
        </TabTools>
      </TabBar>

      <Ribbon>
        <Group $width={178} $flush>
          <GroupBody>
            <Large width={68} icon={<WarningIcon />} lines={['Macro', 'Security']} />
            <Divider />
            <SmallColumn>
              <Small icon={<SaveIcon />} label="Simpan" />
              <Small icon={<PasteIcon />} label="Paste" disabled />
              <Small icon={<RefreshIcon />} label="Segarkan" />
            </SmallColumn>
          </GroupBody>
          <GroupLabel>Sistem</GroupLabel>
        </Group>
        <Group $width={152}>
          <GroupBody>
            <Large width={62} icon={<HouseIcon />} lines={['Menu', 'Utama']} />
            <Large width={80} icon={<GearIcon />} lines={['Pengaturan', 'Dasar']} menu />
          </GroupBody>
          <GroupLabel>AWAL</GroupLabel>
        </Group>
        <Group $width={173}>
          <GroupBody>
            <Large width={60} icon={<ClipboardIcon />} lines={['Angket', 'Cetak']} />
            <SmallColumn $width="42px">
              <Small icon={<FormIcon />} name="Form" />
              <Small icon={<TableFileIcon />} name="Sheet" />
              <Small icon={<PipeIcon />} name="Link" />
            </SmallColumn>
            <Divider />
            <Large width={56} icon={<InputIcon />} lines={['Input', 'Data']} />
          </GroupBody>
          <GroupLabel>INPUT</GroupLabel>
        </Group>
        <Group $width={340} $hot>
          <GroupBody>
            <Large width={62} icon={<ReaderIcon />} lines={['Per', 'Peserta']} />
            <Large width={78} icon={<ChecklistIcon />} lines={['Grafik', 'PerPeserta']} />
            <Divider />
            <Large width={62} icon={<PupilsIcon />} lines={['Output', 'Semua']} />
            <Large width={56} icon={<ChartIcon />} lines={['Grafik', 'Semua']} />
            <Divider $wide />
            <Large width={59} icon={<BookIcon />} lines={['Cover']} hot>
              <Pointer width="19" height="29" viewBox="0 0 19 29">
                <path d="M1 1v24l5-5 4 8 4-2-4-8h7z" fill="#fff" stroke="#000" strokeWidth="1.200" />
              </Pointer>
            </Large>
          </GroupBody>
          <GroupLabel>Output</GroupLabel>
        </Group>
        <Group $width={67}>
          <GroupBody>
            <Large width={60} icon={<ConceptIcon />} lines={['Konsep']} menu />
          </GroupBody>
        </Group>
        <Group $width={260}>
          <GroupBody>
            <Large width={64} icon={<PrinterIcon />} lines={['Cetak', 'Printer']} menu />
            <Large width={62} icon={<PdfIcon />} lines={['Buat', 'PDF']} menu />
            <Divider />
            <SmallColumn>
              <Small icon={<PreviewIcon />} label="Pint Preview" />
              <Small icon={<PageSetupIcon />} label="Page Setup" />
              <Small icon={<ViewIcon />} label="Tampilan" menu />
            </SmallColumn>
          </GroupBody>
          <GroupLabel>CETAK dan PDF</GroupLabel>
        </Group>
        <Group $width={67}>
          <GroupBody>
            <Large width={60} icon={<LockIcon />} lines={['Admin']} menu />
          </GroupBody>
        </Group>
        <Group $width={88}>
          <GroupBody>
            <Large width={82} icon={<DocumentsIcon />} lines={['Dokumen', 'Eksternal']} menu />
          </GroupBody>
        </Group>
        <Group $width={40}>
          <SmallColumn>
            <Small icon={<HelpIcon />} name="Bantuan" />
            <Small icon={<InfoIcon />} name="Info" />
          </SmallColumn>
        </Group>
      </Ribbon>
      <RibbonShade />

      <Workspace>
        <Sheet>
          <Banner>
            <HomeArea>
              <PlainButton type="button" aria-label="Menu Utama"><HomeIcon /></PlainButton>
            </HomeArea>
            <BannerTitle>Cover</BannerTitle>
            <BannerButtons>
              <EditorButton type="button" $dark>Teks<br />Editor</EditorButton>
              <EditorButton type="button">Teks<br />Editor</EditorButton>
            </BannerButtons>
          </Banner>
          <SheetBody>
            <Sidebar>
              <SideTitle><b>PENGATURAN</b> / Setting</SideTitle>
              <Notes>
                <b>Catatan :</b><br />
                *) Ketik spasi untuk mengkosongkan teks<br />
                pada kolom kuning.
              </Notes>
              {fields.map(({ id, label, height }) => (
                <Field key={id} $height={height}>
                  <FieldLabel htmlFor={id}><span>{label}</span><span>:</span></FieldLabel>
                  <YellowBox id={id} />
                </Field>
              ))}
              <LogoRows>
                <LogoSelect id="logo-a" label="Logo A :" value="Konselor"><GalleryIcon /></LogoSelect>
                <LogoSelect id="logo-cadangan" label="Logo Cadangan :" value="Kosong" />
              </LogoRows>
              <Hint>Logo Cadangan bisa di resize sesuai kebutuhan dan sebagai alternatif</Hint>
            </Sidebar>
            <Report>
              <ReportRow $height="163px" $align="flex-end">
                <ReportText $size={29}>Laporan</ReportText>
              </ReportRow>
              <ReportRow $height="108px" $align="center">
                <ReportText $size={37} $bold>ANALISIS GAYA BELAJAR</ReportText>
              </ReportRow>
              <ReportRow $height="auto" $align="flex-start" $last>
                <ReportText $size={24}>Bimbingan dan Konseling (BK)</ReportText>
                <LogoHolder><KonselorLogo /></LogoHolder>
              </ReportRow>
            </Report>
          </SheetBody>
        </Sheet>
        <Backdrop />
        <VScroll>
          <SplitBox />
          <ScrollArrow type="button" aria-label="Scroll up"><ArrowGlyph to="up" /></ScrollArrow>
          <Gap $grow={76} />
          <Thumb $grow={351} $upright>
            <svg width="8" height="8" viewBox="0 0 8 8"><path d="M0 .5h8M0 2.500h8M0 4.500h8M0 6.500h8" stroke="#7d828a" /></svg>
          </Thumb>
          <Gap $grow={331} />
          <ScrollArrow type="button" aria-label="Scroll down"><ArrowGlyph to="down" /></ScrollArrow>
        </VScroll>
      </Workspace>

      <HScroll>
        <ScrollArrow type="button" aria-label="Scroll left"><ArrowGlyph to="left" /></ScrollArrow>
        <Thumb $grow={1}>
          <svg width="8" height="8" viewBox="0 0 8 8"><path d="M.5 0v8M2.500 0v8M4.500 0v8M6.500 0v8" stroke="#7d828a" /></svg>
        </Thumb>
        <ScrollArrow type="button" aria-label="Scroll right"><ArrowGlyph to="right" /></ScrollArrow>
        <SplitBox $upright />
        <Corner />
      </HScroll>

      <StatusBar>
        <StatusTexts>
          <span>Ready</span>
          <span>Calculate</span>
        </StatusTexts>
        <StatusLine $gap={10} />
        <PlainButton type="button" aria-label="Record macro"><MacroSheetIcon /></PlainButton>
        <StatusLine $gap={10} />
        <Spacer />
        <StatusLine $gap={3} />
        <ViewButton type="button" aria-label="Normal" $active><ViewGlyph name="Normal" /></ViewButton>
        <ViewButton type="button" aria-label="Page Layout"><ViewGlyph name="Page Layout" /></ViewButton>
        <ViewButton type="button" aria-label="Page Break"><ViewGlyph name="Page Break" /></ViewButton>
        <ZoomLabel htmlFor="zoom">80%</ZoomLabel>
        <PlainButton type="button" aria-label="Zoom out"><ZoomGlyph /></PlainButton>
        <ZoomRange id="zoom" type="range" min="0" max="200" defaultValue="80" />
        <PlainButton type="button" aria-label="Zoom in"><ZoomGlyph plus /></PlainButton>
      </StatusBar>
    </Window>
  )
}

export default App
